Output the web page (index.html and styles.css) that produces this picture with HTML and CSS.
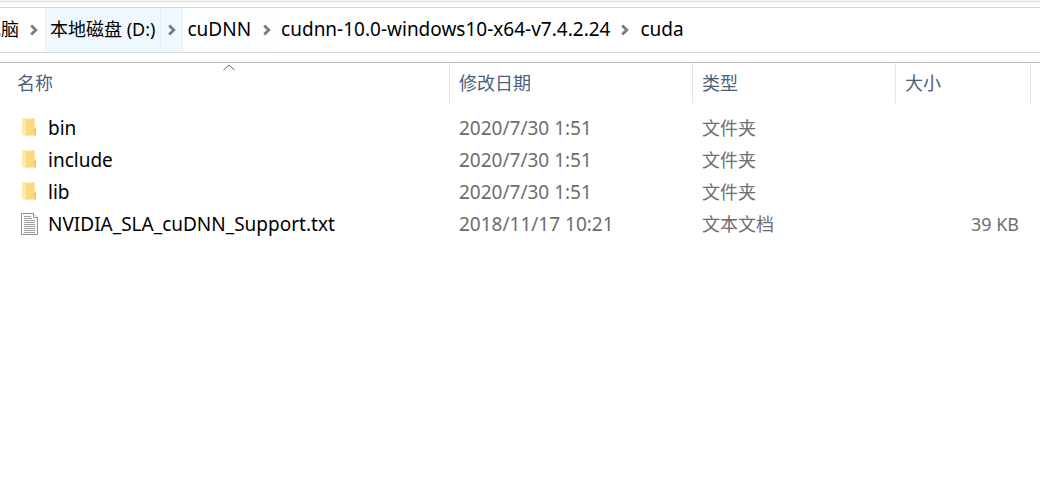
FILE: index.html
```html
<!DOCTYPE html>
<html lang="zh-CN">
<head>
    <meta charset="UTF-8">
    <meta name="viewport" content="width=device-width, initial-scale=1.0">
    <title>cuda</title>
    <link rel="stylesheet" href="styles.css">
</head>
<body>
    <!-- shared icons -->
    <svg class="icon-defs" width="0" height="0" aria-hidden="true">
        <defs>
            <linearGradient id="folderBack" x1="0" y1="0" x2="1" y2="1">
                <stop offset="0" stop-color="#fbe08f"/>
                <stop offset="1" stop-color="#f7d375"/>
            </linearGradient>
            <symbol id="chevron" viewBox="0 0 10 12">
                <path d="M2.2 1.500 L6.8 6 L2.2 10.500" fill="none" stroke="#7c7c7c" stroke-width="2.8"/>
            </symbol>
            <symbol id="folder" viewBox="0 0 20 22">
                <path d="M3 1.500H14.800V11L16 12V18.500H5Z" fill="url(#folderBack)"/>
                <path d="M14.800 11L16 12V18.500H14.800Z" fill="#f0c860"/>
                <path d="M2 1.500L6 5V20.500L2 17Z" fill="#ffe9a8"/>
            </symbol>
            <symbol id="textfile" viewBox="0 0 20 22">
                <path d="M1.500 0.500H13.500L17.500 4.500V21.500H1.500Z" fill="#fafafa" stroke="#929292"/>
                <path d="M13.500 0.500V4.500H17.500" fill="#fff" stroke="#929292"/>
                <path d="M4 3.500H11M4 5.500H12M4 7.500H15M4 9.500H15M4 11.500H15M4 13.500H15M4 15.500H15M4 17.500H15M4 19.500H15" stroke="#a0a0a0"/>
            </symbol>
        </defs>
    </svg>

    <nav class="address-bar" aria-label="地址">
        <div class="crumbs-start">
            <a class="crumb" href="#">此电脑</a>
            <button class="crumb-arrow" type="button" aria-label="展开"><svg class="chevron"><use href="#chevron"/></svg></button>
        </div>
        <div class="crumb-group active">
            <a class="crumb" href="#">本地磁盘 (D:)</a>
            <button class="crumb-arrow" type="button" aria-label="展开"><svg class="chevron"><use href="#chevron"/></svg></button>
        </div>
        <div class="crumb-group fading">
            <a class="crumb latin" href="#">cuDNN</a>
            <button class="crumb-arrow" type="button" aria-label="展开"><svg class="chevron"><use href="#chevron"/></svg></button>
        </div>
        <div class="crumb-group">
            <a class="crumb latin" href="#">cudnn-10.0-windows10-x64-v7.4.2.24</a>
            <button class="crumb-arrow" type="button" aria-label="展开"><svg class="chevron"><use href="#chevron"/></svg></button>
        </div>
        <div class="crumb-group">
            <a class="crumb latin" href="#">cuda</a>
        </div>
    </nav>

    <main class="file-list">
        <table class="files">
            <thead>
                <tr>
                    <th class="col-name" aria-sort="ascending">
                        <button class="sort" type="button">名称</button>
                        <svg class="sort-mark" viewBox="0 0 12 7" aria-hidden="true"><path d="M0.500 6L6 1L11.500 6" fill="none" stroke="#6a6a6a"/></svg>
                    </th>
                    <th class="col-date"><button class="sort" type="button">修改日期</button></th>
                    <th class="col-type"><button class="sort" type="button">类型</button></th>
                    <th class="col-size"><button class="sort" type="button">大小</button></th>
                </tr>
            </thead>
            <tbody>
                <tr>
                    <td><div class="file-name latin"><svg class="file-icon"><use href="#folder"/></svg>bin</div></td>
                    <td class="latin">2020/7/30 1:51</td>
                    <td>文件夹</td>
                    <td class="size"></td>
                </tr>
                <tr>
                    <td><div class="file-name latin"><svg class="file-icon"><use href="#folder"/></svg>include</div></td>
                    <td class="latin">2020/7/30 1:51</td>
                    <td>文件夹</td>
                    <td class="size"></td>
                </tr>
                <tr>
                    <td><div class="file-name latin"><svg class="file-icon"><use href="#folder"/></svg>lib</div></td>
                    <td class="latin">2020/7/30 1:51</td>
                    <td>文件夹</td>
                    <td class="size"></td>
                </tr>
                <tr>
                    <td><div class="file-name latin"><svg class="file-icon"><use href="#textfile"/></svg>NVIDIA_SLA_cuDNN_Support.txt</div></td>
                    <td class="latin">2018/11/17 10:21</td>
                    <td>文本文档</td>
                    <td class="size">39 KB</td>
                </tr>
            </tbody>
        </table>
    </main>
</body>
</html>
```

FILE: styles.css
```css
* {
    box-sizing: border-box;
}

body {
    margin: 0;
    background: #fff;
    color: #000;
    font-family: "Noto Sans", "Noto Sans CJK SC", sans-serif;
    font-size: 18px;
    line-height: 24px;
    border-top: 1px solid #f5f5f5;
}

body::before {
    content: "";
    display: block;
    height: 1px;
    margin-bottom: 5px;
    background: #d9d9d9;
}

button {
    font: inherit;
    color: inherit;
    background: none;
    border: 0;
    padding: 0;
}

.icon-defs {
    position: absolute;
}

/* latin text looks small next to the chinese glyphs */
.latin {
    font-size: 19px;
}

/* address bar */
.address-bar {
    display: flex;
    height: 46px;
    border-top: 1px solid #d9d9d9;
    border-bottom: 1px solid #d9d9d9;
    overflow: hidden;
    white-space: nowrap;
}

.crumb-group {
    display: flex;
}

/* the first crumb is cut off on the left */
.crumbs-start {
    display: flex;
    justify-content: flex-end;
    width: 45px;
    flex: none;
}

.crumb {
    padding: 9px 4px;
    color: #000;
    text-decoration: none;
}

.crumb-arrow {
    display: flex;
    align-items: center;
    justify-content: center;
    width: 22px;
    flex: none;
}

.chevron {
    width: 10px;
    height: 12px;
}

.active {
    background: #f0f8ff;
    border-left: 1px solid #e3f1fc;
    border-right: 1px solid #e3f1fc;
}

.active .crumb {
    padding-right: 5px;
}

.active .crumb-arrow {
    border-left: 1px solid #e3f1fc;
}

.fading {
    background: #fdfeff;
}

.fading .crumb-arrow {
    border-left: 1px solid #f8fcff;
}

/* file list */
.file-list {
    margin-top: 9px;
    border-top: 1px solid #bcbcbc;
    padding: 0 9px 0 8px;
}

.files {
    width: 100%;
    table-layout: fixed;
    border-collapse: separate;
    border-spacing: 0;
    color: #6d6d6d;
}

.files th {
    position: relative;
    height: 40px;
    padding: 0 0 0 9px;
    border-right: 1px solid #e5e5e5;
    color: #4c607a;
    font-weight: normal;
    text-align: left;
}

.col-date {
    width: 243px;
}

.col-type {
    width: 203px;
}

.col-size {
    width: 135px;
}

.sort-mark {
    position: absolute;
    top: 1px;
    left: 50%;
    width: 12px;
    height: 7px;
    margin-left: -6px;
}

.files tbody::before {
    content: "";
    display: block;
    height: 9px;
}

.files td {
    height: 32px;
    padding: 0 0 0 9px;
    white-space: nowrap;
}

.files .size {
    padding-right: 12px;
    text-align: right;
}

.file-name {
    display: flex;
    align-items: center;
    gap: 8px;
    padding-left: 3px;
    color: #000;
}

.file-icon {
    width: 20px;
    height: 22px;
}
```
